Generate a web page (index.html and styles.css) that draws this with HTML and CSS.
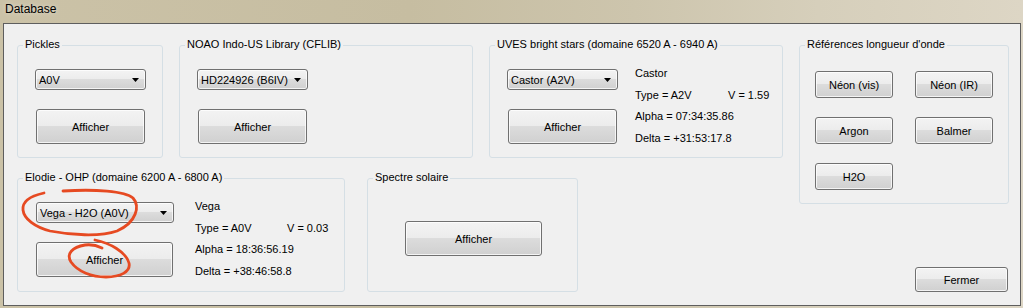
FILE: index.html
```html
<!DOCTYPE html>
<html lang="fr">
<head>
<meta charset="utf-8">
<title>Database</title>
<link rel="stylesheet" href="styles.css">
</head>
<body>
<div class="window">
  <div class="titlebar">Database</div>
  <div class="client">
    <div class="left">
      <div class="row row1">
        <div class="group g-pickles">
          <span class="legend">Pickles</span>
          <div class="ctrl-col">
            <div class="combo w111"><span>A0V</span><svg class="arrow" width="7" height="4" viewBox="0 0 7 4"><polygon points="0,0 7,0 3.5,4" fill="#000"/></svg></div>
            <div class="btn b-std">Afficher</div>
          </div>
        </div>
        <div class="group g-noao">
          <span class="legend">NOAO Indo-US Library (CFLIB)</span>
          <div class="ctrl-col">
            <div class="combo w111"><span>HD224926 (B6IV)</span><svg class="arrow" width="7" height="4" viewBox="0 0 7 4"><polygon points="0,0 7,0 3.5,4" fill="#000"/></svg></div>
            <div class="btn b-std">Afficher</div>
          </div>
        </div>
        <div class="group g-uves">
          <span class="legend">UVES bright stars (domaine 6520 A - 6940 A)</span>
          <div class="ctrl-col">
            <div class="combo w111"><span>Castor (A2V)</span><svg class="arrow" width="7" height="4" viewBox="0 0 7 4"><polygon points="0,0 7,0 3.5,4" fill="#000"/></svg></div>
            <div class="btn b-std">Afficher</div>
          </div>
          <div class="info info-uves">
            <div>Castor</div>
            <div><span class="k">Type = A2V</span>V = 1.59</div>
            <div>Alpha = 07:34:35.86</div>
            <div>Delta = +31:53:17.8</div>
          </div>
        </div>
      </div>
      <div class="row row2">
        <div class="group g-elodie">
          <span class="legend">Elodie - OHP (domaine 6200 A - 6800 A)</span>
          <div class="ctrl-col">
            <div class="combo w138"><span>Vega - H2O (A0V)</span><svg class="arrow" width="7" height="4" viewBox="0 0 7 4"><polygon points="0,0 7,0 3.5,4" fill="#000"/></svg></div>
            <div class="btn b-wide">Afficher</div>
          </div>
          <div class="info info-elodie">
            <div>Vega</div>
            <div><span class="k">Type = A0V</span>V = 0.03</div>
            <div>Alpha = 18:36:56.19</div>
            <div>Delta = +38:46:58.8</div>
          </div>
        </div>
        <div class="group g-solaire">
          <span class="legend">Spectre solaire</span>
          <div class="btn b-wide">Afficher</div>
        </div>
      </div>
    </div>
    <div class="right">
      <div class="group g-refs">
        <span class="legend">Références longueur d'onde</span>
        <div class="ref-grid">
          <div class="btn b-ref">Néon (vis)</div>
          <div class="btn b-ref">Néon (IR)</div>
          <div class="btn b-ref">Argon</div>
          <div class="btn b-ref">Balmer</div>
          <div class="btn b-ref">H2O</div>
        </div>
      </div>
      <div class="btn b-close">Fermer</div>
    </div>
  </div>
  <svg class="annot" width="1023" height="308" viewBox="0 0 1023 308">
    <path d="M63 191 C 95 189, 125 191, 133 198 C 140 206, 137 222, 117 231 C 100 237, 70 235, 50 231 C 35 227, 24 219, 23 210 C 22 201, 30 196, 44 193" fill="none" stroke="#e64a22" stroke-width="2.8" stroke-linecap="round"/>
    <path d="M95 240 C 110 243, 126 252, 129 263 C 131 272, 120 277, 106 277 C 92 277, 78 272, 71 262 C 66 254, 72 247, 85 245 C 92 244, 98 246, 102 248" fill="none" stroke="#e64a22" stroke-width="2.8" stroke-linecap="round"/>
  </svg>
</div>
</body>
</html>
```
FILE: styles.css
```css
* { box-sizing: border-box; }
html, body { margin: 0; padding: 0; }
body {
  width: 1023px;
  height: 308px;
  overflow: hidden;
  font-family: "Liberation Sans", Arial, sans-serif;
  font-size: 11px;
  color: #000;
}
.window {
  position: relative;
  width: 1023px;
  height: 308px;
  display: flex;
  flex-direction: column;
  background: linear-gradient(to right, #cbc2a7 0%, #c6bda1 40%, #cdc5ad 62%, #d6cfbb 80%, #ddd6c5 100%);
}
.titlebar {
  flex: none;
  height: 23px;
  padding-left: 5px;
  font-size: 12px;
  line-height: 19px;
  text-shadow: 0 0 5px rgba(255, 255, 255, 0.55);
}
.client {
  flex: 1;
  margin: 0 2px 2px 3px;
  border: 1px solid #5e5e5e;
  background: #f0f0f0;
  display: flex;
  gap: 16px;
  padding: 21px 0 0 13px;
}
.left {
  width: 766px;
  display: flex;
  flex-direction: column;
  gap: 20px;
}
.row { display: flex; }
.row1 { gap: 16px; }
.row2 { gap: 22px; }

.group {
  position: relative;
  border: 1px solid #d5dfe5;
  border-radius: 3px;
  display: flex;
  align-items: flex-start;
}
.legend {
  position: absolute;
  top: -8px;
  left: 5px;
  padding: 0 2px;
  background: #f0f0f0;
  line-height: 13px;
  white-space: nowrap;
}
.g-pickles { width: 146px; height: 113px; padding: 17px 0 0 17px; }
.g-noao { width: 294px; height: 113px; padding: 17px 0 0 17px; }
.g-uves { width: 294px; height: 113px; padding: 17px 0 0 17px; gap: 17px; }
.g-elodie { width: 328px; height: 114px; padding: 17px 0 0 18px; gap: 21px; }
.g-solaire { width: 211px; height: 114px; padding: 42px 0 0 37px; }
.g-refs { width: 210px; height: 159px; padding: 25px 0 0 15px; }

.ctrl-col {
  display: flex;
  flex-direction: column;
  align-items: flex-start;
  gap: 19px;
  padding-top: 6px;
}

.btn, .combo {
  border: 1px solid #707070;
  border-radius: 3px;
  background: linear-gradient(to bottom, #f3f3f3 0%, #ececec 48%, #dcdcdc 50%, #d0d0d0 100%);
  box-shadow: inset 0 0 0 1px rgba(255, 255, 255, 0.75);
}
.btn {
  display: flex;
  align-items: center;
  justify-content: center;
  white-space: nowrap;
}
.b-std { width: 109px; height: 35px; margin-left: 1px; }
.b-wide { width: 137px; height: 35px; }
.b-ref { width: 78px; height: 27px; }
.b-close { width: 93px; height: 25px; margin-top: 63px; margin-right: 1px; align-self: flex-end; }

.combo {
  height: 21px;
  display: flex;
  align-items: center;
  justify-content: space-between;
  padding: 0 6px 0 3px;
  white-space: nowrap;
}
.w111 { width: 111px; }
.w138 { width: 138px; }
.arrow { flex: none; display: block; }

.info { line-height: 21.5px; white-space: nowrap; }
.info-uves .k { display: inline-block; width: 93px; }
.info-elodie .k { display: inline-block; width: 92px; }

.right {
  width: 210px;
  display: flex;
  flex-direction: column;
}
.ref-grid {
  display: grid;
  grid-template-columns: 78px 78px;
  column-gap: 22px;
  row-gap: 19px;
}

.annot {
  position: absolute;
  left: 0;
  top: 0;
  pointer-events: none;
}
```
